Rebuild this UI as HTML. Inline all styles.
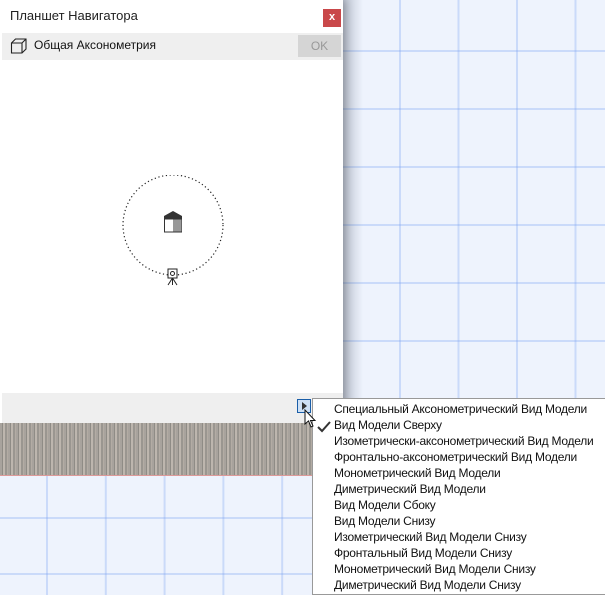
<!DOCTYPE html>
<html><head><meta charset="utf-8"><style>
*{margin:0;padding:0;box-sizing:border-box}
body{width:605px;height:595px;overflow:hidden;position:relative;background:#eef3fd;font-family:"Segoe UI","Liberation Sans","DejaVu Sans",sans-serif;}
.grid{position:absolute;background-color:#eef3fd;
background-image:linear-gradient(to right,rgba(120,160,240,.3) 2px,transparent 2px),linear-gradient(to bottom,rgba(120,160,240,.3) 2px,transparent 2px);}
#g1{left:343px;top:0;width:262px;height:400px;background-size:58.5px 58px;background-position:56px 50px}
#g2{left:0;top:476px;width:320px;height:119px;background-size:58.8px 56px;background-position:46px 41px}
#panel{position:absolute;left:0;top:0;width:343px;height:423px;background:#fff;box-shadow:3px 0 8px rgba(0,0,0,.25)}
#shadow{position:absolute;left:343px;top:0;width:20px;height:400px;background:linear-gradient(to right,rgba(100,110,130,.35),rgba(100,110,130,0))}
.title{position:absolute;left:10px;top:8px;font-size:13px;color:#222}
.close{position:absolute;left:323px;top:9px;width:18px;height:18px;background:#c9484a;color:#fff;font-size:11px;font-weight:bold;text-align:center;line-height:17px}
.bar{position:absolute;left:2px;top:33px;width:341px;height:27px;background:#efefef}
.bar .t{position:absolute;left:32px;top:5px;font-size:12px;color:#111}
.ok{position:absolute;left:296px;top:2px;width:43px;height:22px;background:#d5d5d5;color:#999;font-size:12px;text-align:center;line-height:22px}
.bot{position:absolute;left:2px;top:393px;width:341px;height:30px;background:#efefef}
#tex{position:absolute;left:0;top:423px;width:312px;height:52px;background:repeating-linear-gradient(to right,#a8a39d 0,#a8a39d 2px,#8f8c86 2px,#8f8c86 3px,#bdb6ae 3px,#bdb6ae 5px,#9a9690 5px,#9a9690 7px,#b3aca4 7px,#b3aca4 8px)}
#red{position:absolute;left:0;top:475px;width:312px;height:1px;background:#d99}
#menu{position:absolute;left:312px;top:398px;width:293px;height:197px;background:#fff;border:1px solid #999;border-right:none}
.it{position:absolute;left:21px;font-size:12px;color:#111;white-space:nowrap;letter-spacing:-0.25px}
.btn{position:absolute;left:297px;top:399px;width:14px;height:14px;border:1px solid #1a5ea8;background:#cfe1f5}
</style></head><body>
<div class="grid" id="g1"></div>
<div id="shadow"></div>
<div id="panel">
<div class="title">Планшет Навигатора</div>
<div class="close">x</div>
<div class="bar">
<svg style="position:absolute;left:8px;top:4px" width="18" height="18" viewBox="0 0 18 18"><path d="M1.5 6 L5.5 2 H16 V12 L12 16 H1.5 Z M1.5 6 H12 V16 M12 6 L16 2" fill="none" stroke="#222" stroke-width="1.1"/></svg>
<span class="t">Общая Аксонометрия</span><div class="ok">OK</div></div>
<svg style="position:absolute;left:120px;top:175px" width="110" height="115" viewBox="0 0 110 115">
<circle cx="53" cy="50" r="50" fill="none" stroke="#222" stroke-width="1.2" stroke-dasharray="1.2 2.6"/>
<path d="M44 41 L53 36 L62 41 Z" fill="#333"/>
<rect x="44" y="41" width="18" height="3" fill="#333"/>
<rect x="44.5" y="44" width="17" height="13" fill="#fff" stroke="#333"/>
<rect x="53" y="44.5" width="8.5" height="12" fill="#999"/>
<rect x="48" y="94" width="9" height="9" fill="#fff" stroke="#222"/>
<circle cx="52.5" cy="98.5" r="2" fill="none" stroke="#222"/>
<path d="M52.5 103 L48 110 M52.5 103 L57 110 M52.5 103 V110" stroke="#222" fill="none"/>
</svg>
<div class="bot"></div>
</div>
<div id="tex"></div><div id="red"></div>
<div class="grid" id="g2"></div>
<div id="menu">
<div class="it" style="top:3px">Специальный Аксонометрический Вид Модели</div>
<div class="it" style="top:19px">Вид Модели Сверху</div>
<svg style="position:absolute;left:4px;top:22px" width="14" height="12"><path d="M1 6 L5 10 L13 1" fill="none" stroke="#333" stroke-width="2"/></svg>
<div class="it" style="top:35px">Изометрически-аксонометрический Вид Модели</div>
<div class="it" style="top:51px">Фронтально-аксонометрический Вид Модели</div>
<div class="it" style="top:67px">Монометрический Вид Модели</div>
<div class="it" style="top:83px">Диметрический Вид Модели</div>
<div class="it" style="top:99px">Вид Модели Сбоку</div>
<div class="it" style="top:115px">Вид Модели Снизу</div>
<div class="it" style="top:131px">Изометрический Вид Модели Снизу</div>
<div class="it" style="top:147px">Фронтальный Вид Модели Снизу</div>
<div class="it" style="top:163px">Монометрический Вид Модели Снизу</div>
<div class="it" style="top:179px">Диметрический Вид Модели Снизу</div>
</div>
<div class="btn"><svg width="12" height="12" style="position:absolute;left:0;top:0"><path d="M4 2 L9 6 L4 10 Z" fill="#333"/></svg></div>
<svg style="position:absolute;left:304px;top:409px" width="14" height="20"><path d="M1 1 V15 L4.5 12 L7 18 L9 17 L6.5 11.5 L11 11.5 Z" fill="#fff" stroke="#111" stroke-width="1"/></svg>
</body></html>
